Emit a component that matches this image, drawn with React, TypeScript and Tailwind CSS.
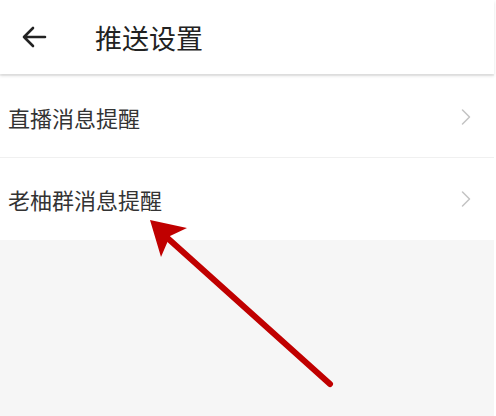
import { ChevronRight } from "lucide-react";

const font = { fontFamily: '"Noto Sans CJK SC", "Noto Sans", sans-serif' };

function Row({ label, last }: { label: string; last?: boolean }) {
  return (
    <div
      className={`flex h-[82px] items-center justify-between bg-white pl-[8px] pr-[14px] ${
        last ? "" : "border-b border-[#f0f0f0]"
      }`}
    >
      <span className="text-[22px] leading-none text-[#333333]">{label}</span>
      <ChevronRight className="h-[28px] w-[28px] text-[#c4c4c4]" strokeWidth={1.3} />
    </div>
  );
}

export default function App() {
  return (
    <div className="relative h-[416px] w-[496px] overflow-hidden bg-white" style={font}>
      <div className="flex h-[416px] w-[494px] flex-col bg-[#f6f6f6]">
        <header className="relative z-10 flex h-[74px] shrink-0 items-center bg-white shadow-[0_2px_3px_rgba(0,0,0,0.12)]">
          <svg className="ml-[20px] h-[26px] w-[28px]" viewBox="0 0 28 26" fill="none">
            <path
              d="M25 13H4M13 4L4 13L13 22"
              stroke="#222"
              strokeWidth="2.6"
              strokeLinecap="round"
              strokeLinejoin="round"
            />
          </svg>
          <h1 className="ml-[47px] text-[27px] leading-none text-[#222222]">推送设置</h1>
        </header>
        <div className="pt-[2px]">
          <Row label="直播消息提醒" />
          <Row label="老柚群消息提醒" last />
        </div>
      </div>
      <svg className="absolute left-0 top-0 h-[416px] w-[496px]" viewBox="0 0 496 416" fill="none">
        <path d="M330 384L163 234" stroke="#c00000" strokeWidth="6" strokeLinecap="round" />
        <path d="M150 220L187 228L170 236L161 257Z" fill="#c00000" />
      </svg>
    </div>
  );
}
